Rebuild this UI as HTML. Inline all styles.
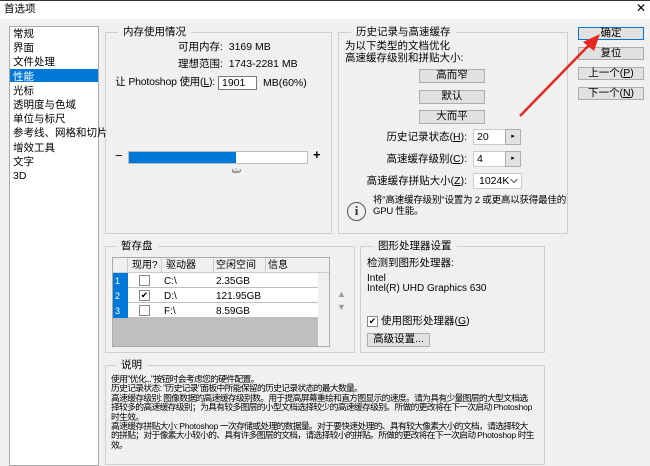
<!DOCTYPE html>
<html><head><meta charset="utf-8"><style>
*{box-sizing:border-box;margin:0;padding:0}
body{width:650px;height:459px;overflow:hidden;background:#f0f0f0;font-family:"Liberation Sans","Noto Sans CJK SC",sans-serif;font-size:10.5px;line-height:13px;color:#000;position:relative}
.a{position:absolute;white-space:nowrap}
.grp{position:absolute;border:1px solid #cfcfcf}
.gt{position:absolute;background:#f0f0f0;padding:0 5px;top:-7px;font-size:10.5px;line-height:13px}
.btn{position:absolute;background:#e1e1e1;border:1px solid #adadad;text-align:center;font-size:10.5px;line-height:11px}
.inp{position:absolute;background:#fff;border:1px solid #7a7a7a;font-size:10.5px;padding-left:3px}
.cb{position:absolute;width:11px;height:11px;border:1px solid #888;background:#fff}
.ps{font-size:8.5px;letter-spacing:-0.2px}
</style></head><body>
<div class="a" style="left:0;top:0;width:650px;height:19px;background:#fff;border-top:1px solid #333"></div>
<div class="a" style="left:4px;top:3px;font-size:10.5px">首选项</div>
<div class="a" style="left:636px;top:2px;font-size:12px">✕</div>

<div class="a" style="left:9px;top:26px;width:90px;height:440px;background:#fff;border:1px solid #aaa"></div>
<div class="a" style="left:10px;top:69px;width:88px;height:13px;background:#0078d7"></div>
<div class="a" style="left:13px;top:27px;line-height:14.2px;font-size:10.5px">常规<br>界面<br>文件处理<br><span style="color:#fff">性能</span><br>光标<br>透明度与色域<br>单位与标尺<br>参考线、网格和切片<br>增效工具<br>文字<br>3D</div>

<div class="grp" style="left:105px;top:32px;width:227px;height:202px"><div class="gt" style="left:12px">内存使用情况</div></div>
<div class="a" style="left:178px;top:41px">可用内存:&nbsp; 3169 MB</div>
<div class="a" style="left:178px;top:58px">理想范围:&nbsp; 1743-2281 MB</div>
<div class="a" style="right:435px;top:76px;letter-spacing:-0.2px">让 Photoshop 使用(<u>L</u>):</div>
<div class="inp" style="left:218px;top:76px;width:39px;height:14px;line-height:12px">1901</div>
<div class="a" style="left:263px;top:77px">MB(60%)</div>
<div class="a" style="left:115px;top:149px;font-size:13px">−</div>
<div class="a" style="left:128px;top:151px;width:180px;height:13px;background:#fff;border:1px solid #bbb"></div>
<div class="a" style="left:129px;top:152px;width:107px;height:11px;background:#0078d7"></div>
<div class="a" style="left:232px;top:164px;width:0;height:0;border:4px solid transparent;border-bottom:5px solid #999"></div>
<div class="a" style="left:232px;top:169px;width:9px;height:3px;background:#ddd;border:1px solid #999;border-top:0"></div>
<div class="a" style="left:313px;top:148px;font-size:13px;font-weight:bold">+</div>

<div class="grp" style="left:338px;top:32px;width:230px;height:202px"><div class="gt" style="left:12px">历史记录与高速缓存</div></div>
<div class="a" style="left:345px;top:40px;line-height:12px">为以下类型的文档优化<br>高速缓存级别和拼贴大小:</div>
<div class="btn" style="left:419px;top:69px;width:66px;height:14px">高而窄</div>
<div class="btn" style="left:419px;top:90px;width:66px;height:14px">默认</div>
<div class="btn" style="left:419px;top:110px;width:66px;height:14px">大而平</div>
<div class="a" style="right:183px;top:131px">历史记录状态(<u>H</u>):</div>
<div class="a" style="right:183px;top:153px">高速缓存级别(<u>C</u>):</div>
<div class="a" style="right:183px;top:175px">高速缓存拼贴大小(<u>Z</u>):</div>
<div class="inp" style="left:473px;top:129px;width:33px;height:16px;line-height:14px;border-color:#ccc">20</div>
<div class="btn" style="left:505px;top:129px;width:16px;height:16px;line-height:14px;font-size:7px">▸</div>
<div class="inp" style="left:473px;top:151px;width:33px;height:16px;line-height:14px;border-color:#ccc">4</div>
<div class="btn" style="left:505px;top:151px;width:16px;height:16px;line-height:14px;font-size:7px">▸</div>
<div class="inp" style="left:473px;top:173px;width:49px;height:16px;line-height:14px;border-color:#ccc;padding-left:5px">1024K</div>
<svg class="a" style="left:510px;top:178px" width="8" height="6"><polyline points="0.5,1 4,4.5 7.5,1" fill="none" stroke="#555"/></svg>
<div class="a" style="left:347px;top:202px;width:19px;height:19px;border:1.5px solid #555;border-radius:50%;text-align:center;font:bold 13px/16px 'Liberation Serif',serif;color:#333">i</div>
<div class="a" style="left:373px;top:195px;line-height:11px;font-size:9.5px;letter-spacing:-0.2px">将"高速缓存级别"设置为 2 或更高以获得最佳的<br>GPU 性能。</div>

<div class="btn" style="left:578px;top:27px;width:66px;height:13px;border-color:#0078d7">确定</div>
<div class="btn" style="left:578px;top:47px;width:66px;height:13px">复位</div>
<div class="btn" style="left:578px;top:67px;width:66px;height:13px">上一个(<u>P</u>)</div>
<div class="btn" style="left:578px;top:87px;width:66px;height:13px">下一个(<u>N</u>)</div>

<svg class="a" style="left:0;top:0" width="650" height="459"><line x1="520" y1="116" x2="592" y2="42" stroke="#e8281e" stroke-width="2.5"/><polygon points="600,34 583,42 594,51" fill="#e8281e"/></svg>

<div class="grp" style="left:105px;top:246px;width:250px;height:107px"><div class="gt" style="left:10px">暂存盘</div></div>
<div class="a" style="left:112px;top:257px;width:218px;height:90px;background:#bfbfbf;border:1px solid #aaa"></div>
<div class="a" style="left:113px;top:258px;width:216px;height:15px;background:#f0f0f0;border-bottom:1px solid #ccc"></div>
<div class="a" style="left:127px;top:258px;width:1px;height:15px;background:#ccc"></div>
<div class="a" style="left:161px;top:258px;width:1px;height:15px;background:#ccc"></div>
<div class="a" style="left:213px;top:258px;width:1px;height:15px;background:#ccc"></div>
<div class="a" style="left:265px;top:258px;width:1px;height:15px;background:#ccc"></div>
<div class="a" style="left:132px;top:259px;font-size:10px">现用?</div><div class="a" style="left:166px;top:259px;font-size:10px">驱动器</div><div class="a" style="left:216px;top:259px;font-size:10px">空闲空间</div><div class="a" style="left:268px;top:259px;font-size:10px">信息</div>
<div class="a" style="left:113px;top:273px;width:15px;height:45px;background:#0078d7"></div>
<div class="a" style="left:128px;top:273px;width:190px;height:14px;background:#fff"></div>
<div class="a" style="left:128px;top:288px;width:190px;height:14px;background:#fff"></div>
<div class="a" style="left:128px;top:303px;width:190px;height:14px;background:#fff"></div>
<div class="a" style="left:318px;top:273px;width:11px;height:73px;background:#f0f0f0"></div>
<div class="a" style="left:115px;top:274px;color:#fff;font-size:9px;line-height:15px">1<br>2<br>3</div>
<div class="cb" style="left:139px;top:275px"></div><div class="cb" style="left:139px;top:290px;font-size:9px;line-height:9px;text-align:center">✔</div><div class="cb" style="left:139px;top:305px"></div>
<div class="a" style="left:164px;top:274px;font-size:10px;line-height:15px">C:\<br>D:\<br>F:\</div>
<div class="a" style="left:216px;top:274px;font-size:10px;line-height:15px">2.35GB<br>121.95GB<br>8.59GB</div>
<div class="a" style="left:337px;top:288px;color:#999;font-size:9px;line-height:13px">▲<br>▼</div>

<div class="grp" style="left:360px;top:246px;width:185px;height:107px"><div class="gt" style="left:12px">图形处理器设置</div></div>
<div class="a" style="left:367px;top:257px">检测到图形处理器:</div>
<div class="a" style="left:367px;top:274px;font-size:10px;line-height:9.5px">Intel<br>Intel(R) UHD Graphics 630</div>
<div class="cb" style="left:367px;top:316px;font-size:9px;line-height:9px;text-align:center">✔</div>
<div class="a" style="left:381px;top:315px">使用图形处理器(<u>G</u>)</div>
<div class="btn" style="left:367px;top:333px;width:63px;height:14px">高级设置...</div>

<div class="grp" style="left:105px;top:365px;width:440px;height:100px"><div class="gt" style="left:10px">说明</div></div>
<div class="a" style="left:111px;top:375px;font-size:8.8px;line-height:9.4px;letter-spacing:-0.7px">使用"优化..."按钮时会考虑您的硬件配置。<br>历史记录状态: "历史记录"面板中所能保留的历史记录状态的最大数量。<br>高速缓存级别: 图像数据的高速缓存级别数。用于提高屏幕重绘和直方图显示的速度。请为具有少量图层的大型文档选<br>择较多的高速缓存级别；为具有较多图层的小型文档选择较少的高速缓存级别。所做的更改将在下一次启动 <span class="ps">Photoshop</span><br>时生效。<br>高速缓存拼贴大小: <span class="ps">Photoshop</span> 一次存储或处理的数据量。对于要快速处理的、具有较大像素大小的文档，请选择较大<br>的拼贴；对于像素大小较小的、具有许多图层的文档，请选择较小的拼贴。所做的更改将在下一次启动 <span class="ps">Photoshop</span> 时生<br>效。</div>
</body></html>
